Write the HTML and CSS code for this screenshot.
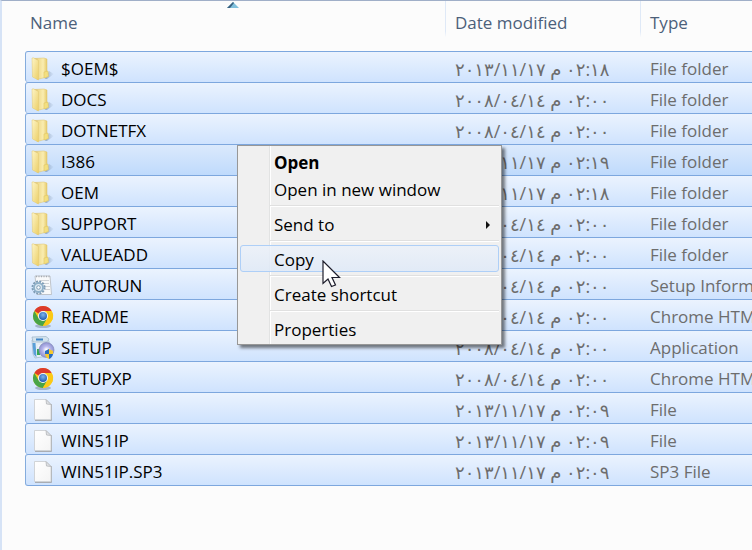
FILE: index.html
```
<!DOCTYPE html>
<html lang="en">
<head>
    <meta charset="UTF-8">
    <meta name="viewport" content="width=device-width, initial-scale=1.0">
    <title>Files</title>
    <link rel="stylesheet" href="styles.css">
</head>
<body>

    <!-- Icon shapes used by the rows -->
    <svg class="defs" aria-hidden="true">
        <defs>
            <linearGradient id="foldFront" x1="0" x2="1" y1="0" y2="1">
                <stop offset="0" stop-color="#fdf5c8"/>
                <stop offset="1" stop-color="#eccf66"/>
            </linearGradient>
            <linearGradient id="foldBack" x1="0" x2="1" y1="0" y2="0">
                <stop offset="0" stop-color="#cda84e"/>
                <stop offset="0.35" stop-color="#f0dc90"/>
                <stop offset="0.7" stop-color="#faedb0"/>
                <stop offset="1" stop-color="#e6cb6c"/>
            </linearGradient>
            <linearGradient id="paper" x1="0" x2="1" y1="0" y2="1">
                <stop offset="0" stop-color="#ffffff"/>
                <stop offset="1" stop-color="#f4f4f4"/>
            </linearGradient>
            <radialGradient id="chromeBlue" cx="0.5" cy="0.35" r="0.6">
                <stop offset="0" stop-color="#7db4ec"/>
                <stop offset="1" stop-color="#2562b5"/>
            </radialGradient>
            <radialGradient id="disc">
                <stop offset="0.1" stop-color="#ffffff"/>
                <stop offset="0.5" stop-color="#b9b8ee"/>
                <stop offset="1" stop-color="#8f93cf"/>
            </radialGradient>
            <linearGradient id="shade" x1="0" x2="1" y1="0" y2="0">
                <stop offset="0" stop-color="#7f93ad" stop-opacity="0.7"/>
                <stop offset="1" stop-color="#7f93ad" stop-opacity="0"/>
            </linearGradient>
            <symbol id="folder" viewBox="0 0 24 24">
                <path d="M14 22 L18 14 L23 17 L16 22 Z" fill="url(#shade)"/>
                <path d="M3 1.500 L13 1 L16 2 L16 20 L6 22.500 Z" fill="url(#foldBack)" stroke="#dfc36c" stroke-width="0.5"/>
                <path d="M13 15 L17 14 L17.500 19.500 L13 21 Z" fill="#f3df80" stroke="#dcc05c" stroke-width="0.5"/>
                <path d="M1 1 L2.500 0.800 L7.500 3.500 L7.500 23 L1.500 20 Z" fill="url(#foldFront)" stroke="#e2c873" stroke-width="0.5"/>
            </symbol>
            <symbol id="file" viewBox="0 0 24 24">
                <path d="M4 22.500 H20.500 V6" fill="none" stroke="#a9adb3" stroke-width="1"/>
                <path d="M3.500 1.500 H15 L20 6.500 V21.500 H3.500 Z" fill="url(#paper)" stroke="#c9cbce" stroke-width="0.8"/>
                <path d="M15 1.500 L15.500 6 L20 6.500 Z" fill="#dfe1e4" stroke="#b4b6ba" stroke-width="0.8"/>
            </symbol>
            <symbol id="chrome" viewBox="0 0 24 24">
                <ellipse cx="12" cy="21" rx="8" ry="2" fill="#5c6c82" opacity="0.4"/>
                <circle cx="12" cy="11" r="10" fill="#fbc916"/>
                <path d="M12 11 L3.300 6 A10 10 0 0 1 20.700 6 L12 6 Z" fill="#dc3a2c"/>
                <path d="M3.300 6 A10 10 0 0 0 11.800 21 L16.300 13.500 L12 11 L7.700 13.500 Z" fill="#48a447"/>
                <path d="M20.700 6 A10 10 0 0 1 11.800 21 L16.300 13.500 L16.300 8.500 L14 6 Z" fill="#fbc916"/>
                <circle cx="12" cy="11" r="5" fill="#f4f6f7"/>
                <circle cx="12" cy="11" r="4" fill="url(#chromeBlue)"/>
            </symbol>
            <symbol id="settings" viewBox="0 0 24 24">
                <path d="M4 2 H19 L20.500 20.500 H6 Z" fill="#f8f9fa" stroke="#b5b9be" stroke-width="0.8"/>
                <path d="M5 2.500 H19" stroke="#a4aab1" stroke-width="1.500" stroke-dasharray="1 1.500"/>
                <path d="M9 6.500 H18 M11 9.500 H18 M13 12.500 H19 M14 15.500 H19" stroke="#cfd2d6" stroke-width="1"/>
                <circle cx="7.500" cy="13.500" r="6" fill="none" stroke="#7f9cb5" stroke-width="2" stroke-dasharray="2 1.140"/>
                <circle cx="7.500" cy="13.500" r="4.500" fill="#dce9f2" stroke="#8fb0c9" stroke-width="1.800"/>
                <circle cx="7.500" cy="13.500" r="1.800" fill="#f8fbfd" stroke="#7f9cb5" stroke-width="1"/>
            </symbol>
            <symbol id="setup" viewBox="0 0 24 24">
                <path d="M1 4 L15 3 L18 5 L17 20 L4 22 L2 18 Z" fill="#e5edf4" stroke="#9fb4c7" stroke-width="0.7"/>
                <path d="M1 1 L15 0.500 L18 3 L16 6 L2 6 Z" fill="#d3e3ee" stroke="#9cb3c6" stroke-width="0.7"/>
                <path d="M5 2.500 H12 V4.500 H5 Z" fill="#3d84c6"/>
                <path d="M1.500 7 L4.500 7 L5.500 21.500 L2.500 18 Z" fill="#5a9fd8"/>
                <path d="M6 13 H9 V19 H6 Z" fill="#35a853"/>
                <path d="M7 9 H11 V12 H7 Z" fill="#f2f6fa"/>
                <circle cx="15.500" cy="14" r="7.500" fill="url(#disc)" stroke="#8488bd" stroke-width="0.7"/>
                <path d="M18 13 L14 15 V18 H18 Z" fill="#2a6cc0"/>
                <path d="M18 13 L22 15 V18 H18 Z" fill="#f5c92e"/>
                <path d="M14 18 H18 V23 Q14.500 21.500 14 18 Z" fill="#f5c92e"/>
                <path d="M18 18 H22 Q21.500 21.500 18 23 Z" fill="#2a6cc0"/>
            </symbol>
        </defs>
    </svg>

    <table class="files">
        <colgroup>
            <col class="col-name">
            <col class="col-date">
            <col class="col-type">
        </colgroup>
        <thead>
            <tr>
                <th>Name
                    <svg class="sort" viewBox="0 0 12 6"><path d="M0 6 L6 0 L12 6 Z" fill="#7fc0dc"/><path d="M0 6 L6 0 L7 1 L3 6 Z" fill="#39617f"/></svg>
                </th>
                <th>Date modified</th>
                <th>Type</th>
            </tr>
        </thead>
        <tbody>
            <tr>
                <td><div class="name"><svg class="icon"><use href="#folder"/></svg>$OEM$</div></td>
                <td class="date">٠٢:١٨ م ٢٠١٣/١١/١٧</td>
                <td>File folder</td>
            </tr>
            <tr>
                <td><div class="name"><svg class="icon"><use href="#folder"/></svg>DOCS</div></td>
                <td class="date">٠٢:٠٠ م ٢٠٠٨/٠٤/١٤</td>
                <td>File folder</td>
            </tr>
            <tr>
                <td><div class="name"><svg class="icon"><use href="#folder"/></svg>DOTNETFX</div></td>
                <td class="date">٠٢:٠٠ م ٢٠٠٨/٠٤/١٤</td>
                <td>File folder</td>
            </tr>
            <tr class="focused">
                <td><div class="name"><svg class="icon"><use href="#folder"/></svg>I386</div></td>
                <td class="date">٠٢:١٩ م ٢٠١٣/١١/١٧</td>
                <td>File folder</td>
            </tr>
            <tr>
                <td><div class="name"><svg class="icon"><use href="#folder"/></svg>OEM</div></td>
                <td class="date">٠٢:١٨ م ٢٠١٣/١١/١٧</td>
                <td>File folder</td>
            </tr>
            <tr>
                <td><div class="name"><svg class="icon"><use href="#folder"/></svg>SUPPORT</div></td>
                <td class="date">٠٢:٠٠ م ٢٠٠٨/٠٤/١٤</td>
                <td>File folder</td>
            </tr>
            <tr>
                <td><div class="name"><svg class="icon"><use href="#folder"/></svg>VALUEADD</div></td>
                <td class="date">٠٢:٠٠ م ٢٠٠٨/٠٤/١٤</td>
                <td>File folder</td>
            </tr>
            <tr>
                <td><div class="name"><svg class="icon"><use href="#settings"/></svg>AUTORUN</div></td>
                <td class="date">٠٢:٠٠ م ٢٠٠٨/٠٤/١٤</td>
                <td>Setup Information</td>
            </tr>
            <tr>
                <td><div class="name"><svg class="icon"><use href="#chrome"/></svg>README</div></td>
                <td class="date">٠٢:٠٠ م ٢٠٠٨/٠٤/١٤</td>
                <td>Chrome HTML Document</td>
            </tr>
            <tr>
                <td><div class="name"><svg class="icon"><use href="#setup"/></svg>SETUP</div></td>
                <td class="date">٠٢:٠٠ م ٢٠٠٨/٠٤/١٤</td>
                <td>Application</td>
            </tr>
            <tr>
                <td><div class="name"><svg class="icon"><use href="#chrome"/></svg>SETUPXP</div></td>
                <td class="date">٠٢:٠٠ م ٢٠٠٨/٠٤/١٤</td>
                <td>Chrome HTML Document</td>
            </tr>
            <tr>
                <td><div class="name"><svg class="icon"><use href="#file"/></svg>WIN51</div></td>
                <td class="date">٠٢:٠٩ م ٢٠١٣/١١/١٧</td>
                <td>File</td>
            </tr>
            <tr>
                <td><div class="name"><svg class="icon"><use href="#file"/></svg>WIN51IP</div></td>
                <td class="date">٠٢:٠٩ م ٢٠١٣/١١/١٧</td>
                <td>File</td>
            </tr>
            <tr>
                <td><div class="name"><svg class="icon"><use href="#file"/></svg>WIN51IP.SP3</div></td>
                <td class="date">٠٢:٠٩ م ٢٠١٣/١١/١٧</td>
                <td>SP3 File</td>
            </tr>
        </tbody>
    </table>

    <div class="menu" role="menu">
        <button type="button" class="default" role="menuitem">Open</button>
        <button type="button" role="menuitem">Open in new window</button>
        <hr>
        <button type="button" role="menuitem">Send to
            <svg class="arrow" viewBox="0 0 4 8"><path d="M0 0 L4 4 L0 8 Z" fill="#111"/></svg>
        </button>
        <hr>
        <button type="button" class="active" role="menuitem">Copy</button>
        <hr>
        <button type="button" role="menuitem">Create shortcut</button>
        <hr>
        <button type="button" role="menuitem">Properties</button>
    </div>

    <svg class="cursor" viewBox="0 0 19 28"><path d="M1 1 V23.500 L6 19 L9.500 26.500 L13.500 25 L10 17.500 H17.500 Z" fill="#fff" stroke="#1d1d2b" stroke-width="1.200"/></svg>

</body>
</html>
```

FILE: styles.css
```
* {
    box-sizing: border-box;
}

body {
    margin: 0;
    min-height: 100vh;
    background-color: #fcfcfc;
    border-left: 2px solid #d6e3f6;
    border-top: 1px solid #a0afc8;
    font-family: "Open Sans", "Noto Sans", "DejaVu Sans", sans-serif;
    font-size: 17px;
    line-height: 24px;
    overflow-x: hidden;
}

.defs {
    position: absolute;
    width: 0;
    height: 0;
}

/* File list */
.files {
    width: calc(100% - 23px);
    margin-left: 23px;
    table-layout: fixed;
    border-spacing: 0;
}

.col-name {
    width: 420px;
}

.col-date {
    width: 195px;
}

th {
    position: relative;
    height: 50px;
    padding: 10px 0 0 9px;
    vertical-align: top;
    text-align: left;
    font-weight: normal;
    color: #4c607a;
    border-left: 1px solid;
    border-image: linear-gradient(#dfe9f7 60%, #fcfcfc 72%) 1;
}

th:first-child {
    padding-left: 5px;
    border-left: none;
}

.sort {
    position: absolute;
    top: 1px;
    left: 202px;
    width: 12px;
    height: 6px;
}

td {
    height: 31px;
    padding: 3px 0 0 10px;
    white-space: nowrap;
    overflow: hidden;
    color: #6d6d6d;
    background: linear-gradient(#ebf3fe, #cfe3fe);
    border-top: 1px solid #7da7de;
}

td:first-child {
    padding-left: 5px;
    color: #000;
    border-left: 1px solid #84acdd;
    border-top-left-radius: 3px;
    border-bottom-left-radius: 3px;
}

tr:last-child td {
    height: 32px;
    border-bottom: 1px solid #7da7de;
}

.focused td {
    background: linear-gradient(#dbe9fc, #bfdafc);
}

.date {
    font-size: 18px;
}

.name {
    display: flex;
    align-items: center;
    gap: 6px;
}

.icon {
    width: 24px;
    height: 24px;
}

/* Context menu */
.menu {
    position: absolute;
    top: 145px;
    left: 237px;
    width: 265px;
    padding: 2px;
    border: 1px solid #979797;
    background: linear-gradient(90deg, #e2e3e3 1px, #fff 1px, #fff 2px, transparent 2px) 31px 0 no-repeat #f0f0f0;
    box-shadow: 3px 3px 3px rgba(0, 0, 0, 0.5);
}

.menu button {
    display: flex;
    align-items: center;
    justify-content: space-between;
    width: 100%;
    height: 27px;
    padding: 2px 8px 0 33px;
    border: 1px solid transparent;
    border-radius: 3px;
    background: none;
    color: #000;
    font: inherit;
    text-align: left;
}

.menu .default {
    font-weight: bold;
}

.menu .active {
    border-color: #aecff7;
    background: linear-gradient(rgba(235, 241, 250, 0.8), rgba(222, 233, 248, 0.8));
}

.menu hr {
    height: 2px;
    margin: 3px 0 3px 30px;
    border: none;
    border-top: 1px solid #e0e0e0;
    background-color: #fff;
}

.arrow {
    width: 4px;
    height: 8px;
}

.cursor {
    position: absolute;
    top: 260px;
    left: 322px;
    width: 19px;
    height: 28px;
}
```
